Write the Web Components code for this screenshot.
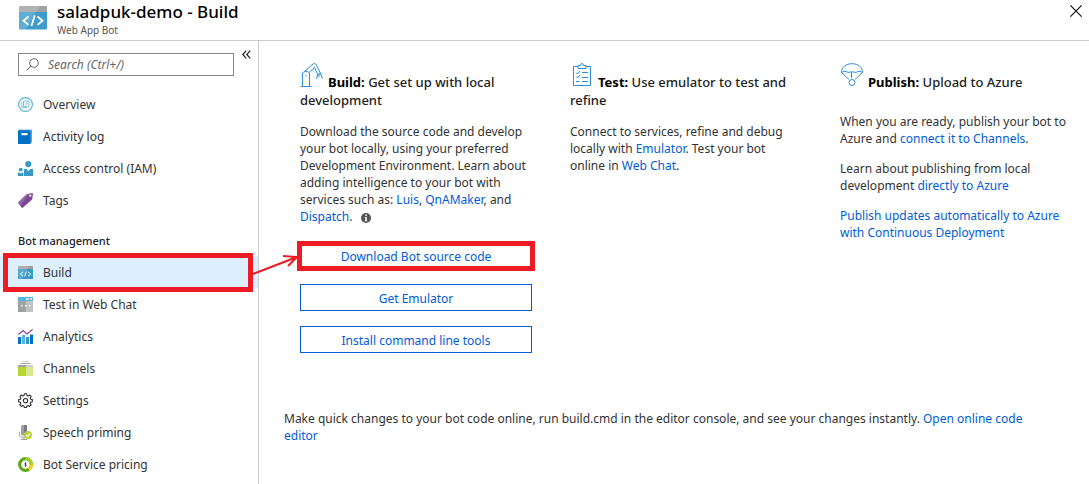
<!DOCTYPE html>
<html lang="en">
<head>
<meta charset="utf-8">
<meta name="viewport" content="width=device-width, initial-scale=1">
<title>saladpuk-demo - Build</title>
<style>
  html, body { margin: 0; background: #fff; }
  body { color: #333; font: 12px/17px "Noto Sans", "Open Sans", sans-serif; }
</style>
</head>
<body>
<bot-blade></bot-blade>

<script>
const ICONS = {
  webapp: `<svg viewBox="0 0 28 24"><path fill="#3f9bc9" d="M0 5h28v17.500a1 1 0 0 1-1 1H1a1 1 0 0 1-1-1z"/><path fill="#a0a1a2" d="M1 0h26a1 1 0 0 1 1 1v5H0V1a1 1 0 0 1 1-1z"/><path fill="#fff" opacity=".18" d="M0 0h21L7 23.500H0z"/><path fill="none" stroke="#fff" stroke-width="1.800" d="M9.500 10.500l-5 4.200 5 4.200M18.500 10.500l5 4.200-5 4.200M15.800 9.500l-3.400 10.500"/></svg>`,
  overview: `<svg viewBox="0 0 15 15" fill="none" stroke="#59b4d9"><circle cx="7.500" cy="7.500" r="6.900" stroke-width="1.200"/><path stroke-width=".9" d="M5.500 4h5.500v6H8.500M5.500 4v5.500M3.800 5.200v5.600h4.700V9.500H5.500M8 5.800v2.400M9.500 5.800H8" opacity=".9"/></svg>`,
  log: `<svg viewBox="0 0 15 15"><path fill="#59a5dc" d="M2 0h12v13l-1.500 2H1z"/><rect fill="#0072c6" y="1" x="0" width="12.500" height="14" rx=".8"/><rect fill="#b9dcf4" x="1" y="0" width="13" height="1.200"/><rect fill="#fff" x="3.500" y="4" width="6" height="2.200"/></svg>`,
  iam: `<svg viewBox="0 0 15 15" fill="#3999c6"><circle cx="10.300" cy="3.100" r="3.100"/><path d="M6 8h2.500l1.800 2.200L12.200 8H15v7H6z"/><circle cx="2.700" cy="8.600" r="1.900"/><path d="M0 11.500h1.500l1.200 1.200 1.300-1.200h1.400V15H0z"/></svg>`,
  tags: `<svg viewBox="0 0 15 15"><path fill="#804998" d="M8.500 1.200L14 0l1 .6-.8 6L5 14.600a1 1 0 0 1-1.400 0L.3 10.200a1 1 0 0 1 0-1.300z"/><path fill="#fff" opacity=".15" d="M8.500 1.200L11 .6 2.300 12.800.3 10.200a1 1 0 0 1 0-1.300z"/><circle fill="#fff" cx="12.300" cy="2.700" r="1.100"/></svg>`,
  build: `<svg viewBox="0 0 15 13"><path fill="#3999c6" d="M0 2h15v11H0z"/><path fill="#a0a1a2" d="M0 0h15v3H0z"/><path fill="#fff" opacity=".15" d="M0 0h11L4 13H0z"/><path fill="none" stroke="#fff" d="M5 5.800L2.400 8 5 10.200M10 5.800L12.600 8 10 10.200M8.400 5.500l-1.800 5"/></svg>`,
  chat: `<svg viewBox="0 0 15 15"><path fill="#a0a1a2" d="M0 3h15v12H0z"/><path fill="#fff" opacity=".35" d="M8 3h7v12H8z"/><path fill="#59b4d9" d="M0 0h15v4H0z"/><path fill="#c4e4f2" d="M8 1h3v2H8zM12 1h2v2h-2z"/><path fill="#fff" d="M3 8h1.500v1.500H3zM7 8h1.500v1.500H7zM11 8h1.500v1.500H11z"/></svg>`,
  analytics: `<svg viewBox="0 0 15 15"><path fill="#0072c6" d="M0 8h3.200v7H0zM12 5.500h3V15h-3z"/><path fill="#59b4d9" d="M4 6h3.200v9H4z"/><path fill="#3999c6" d="M8 8h3.200v7H8z"/><path fill="none" stroke="#804998" stroke-width="1.200" d="M.5 5.500L5 1.500l4 3.500L14.600.4"/></svg>`,
  channels: `<svg viewBox="0 0 15 15"><path fill="#c8c9ca" d="M4.500 0h6v1h-6z"/><path fill="#a0a1a2" d="M2.500 2h10v1h-10z"/><path fill="#a0a1a2" d="M0 4h15v3H0z"/><path fill="#b8d432" d="M0 6h15v9H0z"/><path fill="#fff" opacity=".45" d="M8 4h7v11H8z"/></svg>`,
  settings: `<svg viewBox="0 0 16 16" fill="none" stroke="#333" stroke-width="1.200" stroke-linejoin="round"><path d="M6.800.8h2.400l.4 1.900 1.300.5 1.600-1.100 1.600 1.700-1 1.600.5 1.300 1.700.4v2.200l-1.800.5-.5 1.300 1 1.600-1.600 1.600-1.600-1-1.300.5-.4 1.800H6.800l-.4-1.800-1.300-.5-1.600 1L2 12.700l1-1.600-.5-1.300-1.800-.5V7.100l1.800-.4L3 5.400l-1-1.600 1.600-1.700 1.500 1.100 1.300-.5z"/><circle cx="8" cy="8.200" r="2.300"/></svg>`,
  speech: `<svg viewBox="0 0 15 15"><rect fill="#a0a1a2" x="3" y="0" width="6" height="10.500" rx="1.500"/><rect fill="#7a7a7a" x="6" y="0" width="3" height="10.500" rx="1"/><path fill="none" stroke="#a0a1a2" d="M1.500 7v2.500c0 2 1 2.700 2.500 2.700h4M6 12v2.500M3 14.500h6"/><circle fill="#b8d432" cx="10" cy="10" r="4"/><path fill="none" stroke="#fff" stroke-width="1.200" d="M8 10l1.500 1.500L12 8.600"/></svg>`,
  pricing: `<svg viewBox="0 0 15 15" fill="none"><circle cx="7.500" cy="7.500" r="5.900" stroke="#5fa81b" stroke-width="3.200"/><path stroke="#a3cf2d" stroke-width="3.200" d="M7.500 1.600A5.900 5.900 0 0 1 13.400 7.500"/><path stroke="#fcd116" stroke-width="3.200" d="M13.400 7.500a5.900 5.900 0 0 1-2.700 4.900"/><path stroke="#444" stroke-width=".8" d="M8.500 6.200H7v1.300h1.100v1.400H6.500M7.500 5.200v4.600"/></svg>`,
  search: `<svg viewBox="0 0 13 13" fill="none" stroke="#666"><circle cx="8" cy="5" r="4.300"/><path d="M5 8L.5 12.500"/></svg>`,
  collapse: `<svg viewBox="0 0 9 9" fill="none" stroke="#222" stroke-width="1.200"><path d="M4.200.6L.8 4.500l3.400 3.900M8.200.6L4.800 4.500l3.400 3.900"/></svg>`,
  close: `<svg viewBox="0 0 12 12" stroke="#111" stroke-width="1.200"><path d="M.4.400l11.200 11.200M11.600.4L.4 11.600"/></svg>`,
  info: `<svg viewBox="0 0 10 10"><circle fill="#555" cx="5" cy="5" r="5"/><path fill="#fff" d="M4.300 1.600h1.500V3H4.300zM3.800 4h2v3.400h.6v.8H3.700v-.8h.6V4.800h-.5z"/></svg>`,
  arm: `<svg viewBox="0 0 24 24" fill="none" stroke="#2b8fdc"><path d="M2.500 23V11c0-1.700 1.200-2.500 3.500-2.500s3.500.8 3.500 2.500v12M.5 23.500h11M4.500 8.500L13 1c1-.8 2.700-.4 3.300.8l4 8.200M9 9.500l5.500-5M14.500 4.500l3.200 7M6 12v1.500M17.500 11.500l4-1.500M17.800 11.500L16.500 16M20.500 10.500l2 5M19 11v3"/></svg>`,
  clipboard: `<svg viewBox="0 0 24 24" fill="none" stroke="#2b8fdc"><path d="M8 3.500H3.500v19h17v-19H16M8 2.500h2.500L11 .8h2l.5 1.700H16v3H8zM12 9.500h6M12 14.500h6M12 18.500h6M6 9.500l1.500 1.500 2.500-3M6 13.500L7.500 15l2.500-3M6 18.500h3"/></svg>`,
  parachute: `<svg viewBox="0 0 24 24" fill="none" stroke="#2b8fdc"><path d="M1.500 9.500C1.500 4 6 .7 12 .7S22.500 4 22.500 9.500M1.500 9.500l7.500 7M22.500 9.500l-7.500 7M1.500 9.500c2.500-1.500 5-1.500 6.500 0 2-.8 6-.8 8 0 1.500-1.500 4-1.500 6.500 0M11.500 9v6"/><circle cx="12" cy="19.500" r="3"/></svg>`
};

function define(name, template, ready) {
  const tpl = document.createElement("template");
  tpl.innerHTML = template;
  customElements.define(name, class extends HTMLElement {
    constructor() {
      super();
      this.attachShadow({ mode: "open" }).append(tpl.content.cloneNode(true));
    }
    connectedCallback() { if (ready) ready(this, this.shadowRoot); }
  });
}

define("bot-icon", `
  <style>
    :host { display: inline-block; width: 15px; height: 15px; flex: none; }
    span { display: contents; }
    svg { display: block; width: 100%; height: 100%; }
  </style><span aria-hidden="true"></span>`,
  (el, root) => { root.querySelector("span").innerHTML = ICONS[el.getAttribute("name")] || ""; });

define("bot-link", `
  <style>:host { display: inline; } a { color: #015cda; text-decoration: none; } a:hover { text-decoration: underline; }</style>
  <a href="#"><slot></slot></a>`);

define("bot-button", `
  <style>
    :host { display: block; position: relative; }
    button { display: block; width: 100%; height: 27px; padding: 2px 0 0; border: 1px solid #015cda; background: #fff; color: #015cda; font: inherit; cursor: pointer; }
    :host([marked])::after { content: ""; position: absolute; inset: -1px -3px -2px; border: 5px solid #ed1c24; pointer-events: none; }
  </style>
  <button type="button"><slot></slot></button>`);

define("bot-header", `
  <style>
    :host { display: flex; align-items: flex-start; height: 40px; padding: 0 7px 0 19px; border-bottom: 1px solid #ccc; }
    .logo { width: 28px; height: 24px; margin: 6px 10px 0 0; }
    .titles { flex: 1; color: #000; }
    h1 { margin: 0; font-size: 17px; line-height: 24px; font-weight: 500; }
    p { margin: 0; color: #555; font-size: 10px; line-height: 12px; }
    button { margin-top: 5px; padding: 0; border: 0; background: none; line-height: 0; cursor: pointer; }
    button bot-icon { width: 12px; height: 12px; }
  </style>
  <bot-icon class="logo" name="webapp"></bot-icon>
  <div class="titles"><h1><slot></slot></h1><p><slot name="kind"></slot></p></div>
  <button type="button" aria-label="Close"><bot-icon name="close"></bot-icon></button>`);

define("bot-search", `
  <style>
    :host { display: flex; align-items: flex-start; gap: 8px; padding: 9px 7px 12px 18px; }
    label { display: flex; flex: 1; align-items: center; gap: 9px; height: 21px; margin-top: 3px; padding: 0 7px; border: 1px solid #888; }
    label bot-icon { width: 13px; height: 13px; }
    input { flex: 1; min-width: 0; padding: 0; border: 0; outline: 0; background: none; color: #333; font: inherit; }
    input::placeholder { color: #666; font-style: italic; opacity: 1; }
    button { padding: 0; border: 0; background: none; line-height: 0; cursor: pointer; }
    button bot-icon { width: 9px; height: 9px; }
  </style>
  <label><bot-icon name="search"></bot-icon><input type="text" placeholder="Search (Ctrl+/)" aria-label="Search"></label>
  <button type="button" aria-label="Collapse menu"><bot-icon name="collapse"></bot-icon></button>`);

define("nav-item", `
  <style>
    :host { display: block; position: relative; }
    a { display: flex; align-items: center; gap: 10px; height: 32px; padding-left: 18px; color: #333; text-decoration: none; }
    :host([current]) a { background: #dcf0ff; }
    :host([marked])::after { content: ""; position: absolute; inset: -3px 5px -4px 3px; border: 5px solid #ed1c24; pointer-events: none; }
  </style>
  <a href="#"><bot-icon></bot-icon><slot></slot></a>`,
  (el, root) => {
    const icon = document.createElement("bot-icon");
    icon.setAttribute("name", el.getAttribute("icon"));
    root.querySelector("bot-icon").replaceWith(icon);
    if (el.hasAttribute("current")) root.querySelector("a").setAttribute("aria-current", "page");
  });

define("bot-nav", `
  <style>
    :host { display: block; width: 258px; flex: none; border-right: 1px solid #ccc; }
    h2 { margin: 0; padding: 16px 18px 7px; color: #222; font-size: 11px; line-height: 17px; font-weight: 500; }
  </style>
  <bot-search></bot-search>
  <nav>
    <nav-item icon="overview">Overview</nav-item>
    <nav-item icon="log">Activity log</nav-item>
    <nav-item icon="iam">Access control (IAM)</nav-item>
    <nav-item icon="tags">Tags</nav-item>
    <h2>Bot management</h2>
    <nav-item icon="build" current marked>Build</nav-item>
    <nav-item icon="chat">Test in Web Chat</nav-item>
    <nav-item icon="analytics">Analytics</nav-item>
    <nav-item icon="channels">Channels</nav-item>
    <nav-item icon="settings">Settings</nav-item>
    <nav-item icon="speech">Speech priming</nav-item>
    <nav-item icon="pricing">Bot Service pricing</nav-item>
  </nav>`);

define("bot-step", `
  <style>
    :host { display: block; min-width: 0; }
    h3 { min-height: 36px; margin: 0 0 14px; color: #222; font-size: 13px; line-height: 18px; font-weight: 500; }
    h3 bot-icon { width: 24px; height: 24px; margin-right: 4px; vertical-align: baseline; }
    b { color: #000; font-weight: 700; }
  </style>
  <h3><bot-icon></bot-icon><b><slot name="step"></slot></b> <slot name="title"></slot></h3>
  <slot></slot>`,
  (el, root) => {
    const icon = document.createElement("bot-icon");
    icon.setAttribute("name", el.getAttribute("icon"));
    root.querySelector("bot-icon").replaceWith(icon);
  });

define("bot-main", `
  <style>
    :host { display: block; flex: 1; min-width: 0; }
    .steps { display: grid; grid-template-columns: repeat(3, minmax(0, 1fr)); gap: 38px; padding: 22px 17px 0 41px; }
    p { margin: 0 0 13px; }
    .info { width: 10px; height: 10px; margin-left: 5px; vertical-align: -2px; }
    .actions { display: grid; gap: 15px; margin-top: 17px; }
    .note { margin: 57px 41px 0 25px; }
  </style>
  <div class="steps">
    <bot-step icon="arm">
      <span slot="step">Build:</span><span slot="title">Get set up with local development</span>
      <p>Download the source code and develop your bot locally, using your preferred Development Environment. Learn about adding intelligence to your bot with services such as: <bot-link>Luis</bot-link>, <bot-link>QnAMaker</bot-link>, and <bot-link>Dispatch</bot-link>. <bot-icon class="info" name="info"></bot-icon></p>
      <div class="actions">
        <bot-button marked>Download Bot source code</bot-button>
        <bot-button>Get Emulator</bot-button>
        <bot-button>Install command line tools</bot-button>
      </div>
    </bot-step>
    <bot-step icon="clipboard">
      <span slot="step">Test:</span><span slot="title">Use emulator to test and refine</span>
      <p>Connect to services, refine and debug locally with <bot-link>Emulator</bot-link>. Test your bot online in <bot-link>Web Chat</bot-link>.</p>
    </bot-step>
    <bot-step icon="parachute">
      <span slot="step">Publish:</span><span slot="title">Upload to Azure</span>
      <p>When you are ready, publish your bot to Azure and <bot-link>connect it to Channels</bot-link>.</p>
      <p>Learn about publishing from local development <bot-link>directly to Azure</bot-link></p>
      <p><bot-link>Publish updates automatically to Azure with Continuous Deployment</bot-link></p>
    </bot-step>
  </div>
  <p class="note">Make quick changes to your bot code online, run build.cmd in the editor console, and see your changes instantly. <bot-link>Open online code editor</bot-link></p>`);

define("bot-blade", `
  <style>
    :host { display: block; }
    .body { display: flex; position: relative; min-height: calc(100vh - 41px); }
    .arrow { position: absolute; left: 253px; top: 212px; width: 46px; height: 24px; pointer-events: none; }
  </style>
  <bot-header>saladpuk-demo - Build<span slot="kind">Web App Bot</span></bot-header>
  <div class="body">
    <bot-nav></bot-nav>
    <bot-main></bot-main>
    <svg class="arrow" viewBox="0 0 46 24" fill="none" stroke="#ed1c24" stroke-width="2" aria-hidden="true"><path d="M0 21L44 4M30 3l14 1-9 9"/></svg>
  </div>`);
</script>
</body>
</html>
